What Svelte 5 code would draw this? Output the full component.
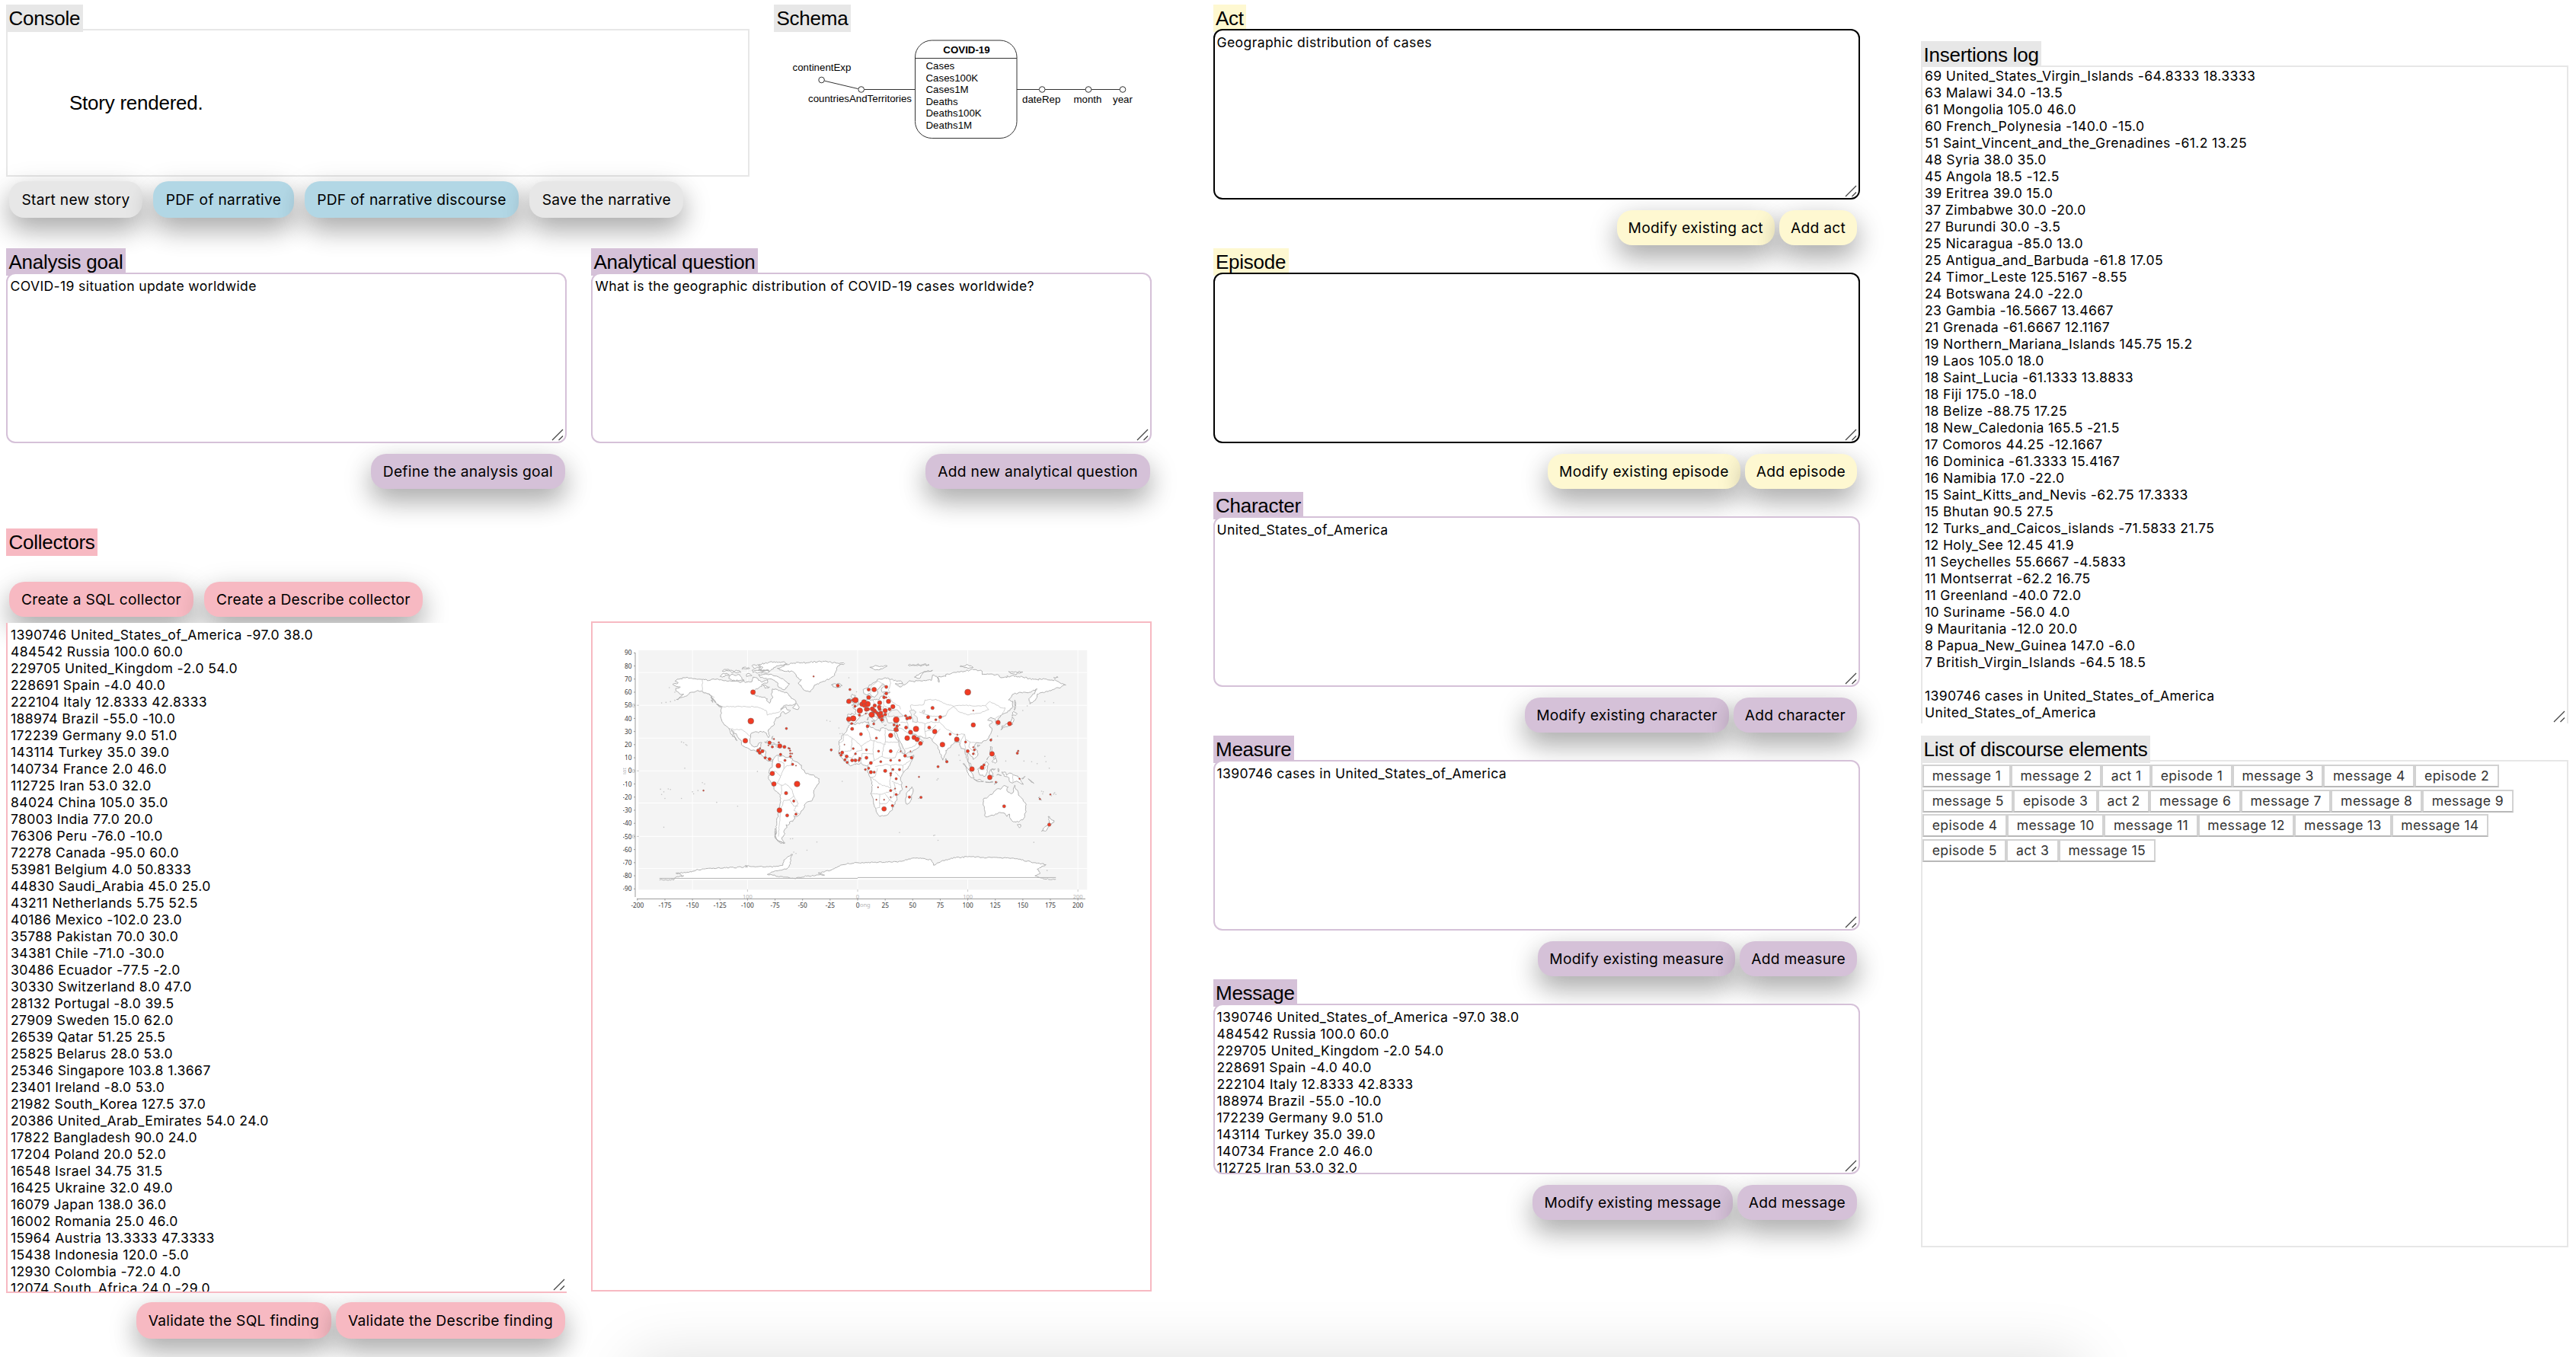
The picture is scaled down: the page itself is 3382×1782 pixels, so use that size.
<script>
  const findings = `1390746 United_States_of_America -97.0 38.0
484542 Russia 100.0 60.0
229705 United_Kingdom -2.0 54.0
228691 Spain -4.0 40.0
222104 Italy 12.8333 42.8333
188974 Brazil -55.0 -10.0
172239 Germany 9.0 51.0
143114 Turkey 35.0 39.0
140734 France 2.0 46.0
112725 Iran 53.0 32.0
84024 China 105.0 35.0
78003 India 77.0 20.0
76306 Peru -76.0 -10.0
72278 Canada -95.0 60.0
53981 Belgium 4.0 50.8333
44830 Saudi_Arabia 45.0 25.0
43211 Netherlands 5.75 52.5
40186 Mexico -102.0 23.0
35788 Pakistan 70.0 30.0
34381 Chile -71.0 -30.0
30486 Ecuador -77.5 -2.0
30330 Switzerland 8.0 47.0
28132 Portugal -8.0 39.5
27909 Sweden 15.0 62.0
26539 Qatar 51.25 25.5
25825 Belarus 28.0 53.0
25346 Singapore 103.8 1.3667
23401 Ireland -8.0 53.0
21982 South_Korea 127.5 37.0
20386 United_Arab_Emirates 54.0 24.0
17822 Bangladesh 90.0 24.0
17204 Poland 20.0 52.0
16548 Israel 34.75 31.5
16425 Ukraine 32.0 49.0
16079 Japan 138.0 36.0
16002 Romania 25.0 46.0
15964 Austria 13.3333 47.3333
15438 Indonesia 120.0 -5.0
12930 Colombia -72.0 4.0
12074 South_Africa 24.0 -29.0`;

  const insertions = `69 United_States_Virgin_Islands -64.8333 18.3333
63 Malawi 34.0 -13.5
61 Mongolia 105.0 46.0
60 French_Polynesia -140.0 -15.0
51 Saint_Vincent_and_the_Grenadines -61.2 13.25
48 Syria 38.0 35.0
45 Angola 18.5 -12.5
39 Eritrea 39.0 15.0
37 Zimbabwe 30.0 -20.0
27 Burundi 30.0 -3.5
25 Nicaragua -85.0 13.0
25 Antigua_and_Barbuda -61.8 17.05
24 Timor_Leste 125.5167 -8.55
24 Botswana 24.0 -22.0
23 Gambia -16.5667 13.4667
21 Grenada -61.6667 12.1167
19 Northern_Mariana_Islands 145.75 15.2
19 Laos 105.0 18.0
18 Saint_Lucia -61.1333 13.8833
18 Fiji 175.0 -18.0
18 Belize -88.75 17.25
18 New_Caledonia 165.5 -21.5
17 Comoros 44.25 -12.1667
16 Dominica -61.3333 15.4167
16 Namibia 17.0 -22.0
15 Saint_Kitts_and_Nevis -62.75 17.3333
15 Bhutan 90.5 27.5
12 Turks_and_Caicos_islands -71.5833 21.75
12 Holy_See 12.45 41.9
11 Seychelles 55.6667 -4.5833
11 Montserrat -62.2 16.75
11 Greenland -40.0 72.0
10 Suriname -56.0 4.0
9 Mauritania -12.0 20.0
8 Papua_New_Guinea 147.0 -6.0
7 British_Virgin_Islands -64.5 18.5

1390746 cases in United_States_of_America
United_States_of_America`;

  const story = [
    { name: 'Act', tone: 'yellow', ink: true, text: 'Geographic distribution of cases' },
    { name: 'Episode', tone: 'yellow', ink: true, text: '' },
    { name: 'Character', tone: 'purple', text: 'United_States_of_America' },
    { name: 'Measure', tone: 'purple', text: '1390746 cases in United_States_of_America' },
    { name: 'Message', tone: 'purple', text: findings.split('\n').slice(0, 10).join('\n') }
  ];

  const goals = [
    { name: 'Analysis goal', text: 'COVID-19 situation update worldwide', action: 'Define the analysis goal' },
    { name: 'Analytical question', text: 'What is the geographic distribution of COVID-19 cases worldwide?', action: 'Add new analytical question' }
  ];

  const discourse = [
    ['message 1', 'message 2', 'act 1', 'episode 1', 'message 3', 'message 4', 'episode 2'],
    ['message 5', 'episode 3', 'act 2', 'message 6', 'message 7', 'message 8', 'message 9'],
    ['episode 4', 'message 10', 'message 11', 'message 12', 'message 13', 'message 14'],
    ['episode 5', 'act 3', 'message 15']
  ];

  const measures = ['Cases', 'Cases100K', 'Cases1M', 'Deaths', 'Deaths100K', 'Deaths1M'];

  // Equirectangular projection: degrees to pixels of the map drawing.
  const px = (lon) => 1126 + lon * 1.4458;
  const py = (lat) => 1012.3 - lat * 1.722;

  // Deterministic noise, so that coastlines look uneven but never change.
  const noise = (a, b) => {
    const s = Math.sin(a * 12.9898 + b * 78.233) * 43758.5453;
    return s - Math.floor(s) - 0.5;
  };

  function outline(text, rough, close) {
    const pts = text.trim().split(/\s+/).map((p) => p.split(',').map(Number));
    const out = [];
    const n = close ? pts.length : pts.length - 1;
    for (let i = 0; i < n; i++) {
      const [ax, ay] = pts[i];
      const [bx, by] = pts[(i + 1) % pts.length];
      const steps = rough ? Math.max(1, Math.round(Math.hypot(bx - ax, by - ay) / 1.3)) : 1;
      for (let k = 0; k < steps; k++) {
        const t = k / steps;
        const amp = k ? rough : 0;
        const x = ax + (bx - ax) * t;
        const y = ay + (by - ay) * t;
        out.push(px(x + noise(x, y) * amp).toFixed(1) + ' ' + py(y + noise(y, x) * amp).toFixed(1));
      }
    }
    if (!close) out.push(px(pts[n][0]).toFixed(1) + ' ' + py(pts[n][1]).toFixed(1));
    return 'M' + out.join('L') + (close ? 'Z' : '');
  }

  const land = [
    // North and Central America
    '-168,66 -163,67 -166,68.5 -162,70 -156,71 -148,70.3 -141,69.7 -135,69 -128,70 -124,69.5 -115,68.5 -108,68 -101,67.7 -96,68 -95,71.5 -92,71 -90,69 -86,68 -82,69.5 -82,67 -87,66 -87,64.5 -93,62 -94.5,60 -94.5,58.5 -92,57 -88,56.5 -82,55 -82,53 -80,51.5 -79,53 -79,54.5 -77,56 -78.5,58.5 -77.5,60 -77.5,62.5 -73,62 -69,60.5 -65,60 -62,57 -59,55 -56,53 -56,51.5 -60,50 -66,50 -70,47 -65,48.8 -64,46.5 -61,46 -63,44.8 -66,43.5 -67,45 -70,43.5 -70,41.7 -74,40.5 -76,37 -76,35 -79,33 -81,31.5 -80,27 -81,25.3 -82.5,27.5 -83,29 -85,30 -89,30 -90,29 -94,29.5 -97.3,27.5 -97.5,25 -97.8,22 -96,19 -94,18.2 -91,18.7 -90,21 -87,21.5 -88,18.5 -88.8,16 -83.5,15 -83.5,11 -81,9 -79,9.5 -77,8.5 -78,7.5 -80,7.5 -83,8.5 -86,11 -88,13 -92,14.5 -96,15.7 -102,18 -105.5,20 -105.5,22.5 -109,26 -112.5,30 -114.7,31.5 -113,29 -109.5,23 -112,26 -115,28 -117,32.5 -121,35 -124,40 -124,47 -123,49 -128,51 -130,54 -134,58 -138,59.5 -146,61 -151,60 -154,58 -158,56.3 -164.5,54.5 -160,57 -158,58.5 -162,59 -165,61 -165,63 -161,64 -166,65',
    // Greenland
    '-73,78.2 -68,79.5 -65,81 -60,82 -50,82.3 -40,83.2 -30,83.5 -22,82.5 -12,81.7 -18,80 -19,77 -20,75 -22,72 -25,70.5 -30,68.3 -38,65.7 -43,60.2 -48,61.3 -51,64 -54,67 -51,69.5 -54,71 -56,73.5 -59,75.7 -67,76',
    // Arctic archipelago
    '-90,81 -80,83 -66,82.8 -64,81.5 -76,79 -79,76.5 -89,76.5 -86,79', '-117,73 -107,73.3 -105,70 -103,69 -114,69 -117,70.5', '-125,72 -122,74.3 -117,73.5 -123,71.3',
    '-90,73.5 -82,73.6 -76,72.5 -68,70.3 -62,66.5 -66,62 -72,64 -73,67.5 -78,70 -88,71', '-96,80 -91,81 -88,79 -94,78', '-103,79 -98,78.2 -105,77.5', '-116,76.5 -108,76.5 -106,75 -114,74.8', '-96,76.7 -80,75.7 -82,74.5 -95,75', '-101,73.5 -98,74 -96,72.7 -101,72', '-123,76 -116,76.5 -121,77.4', '-86,65.5 -80,64 -84,63', '-81,77 -90,77.3 -86,76.6',
    '-59,48 -55.5,51.5 -53,48.5 -54,46.8', '-128,50.7 -124,48.5 -126,49.3', '-133,54 -131.5,52.2 -132,54', '-134,58 -131,55 -133,56 -129,52 -131,54 -135,58.5',
    // Caribbean
    '-84.5,22 -82,23.1 -77,21.3 -74.5,20.2 -77.5,20', '-74,19.8 -70,19.8 -68.5,18.5 -72,18 -74,18.5', '-78,18.4 -76.3,18', '-67,18.4 -65.7,18.2', '-78,25 -77,26.5 -77.5,24',
    // South America
    '-77,8 -75,10.7 -72,12 -71,11 -68,11.5 -65,10.2 -62,10.7 -59,8 -54,6 -51,4.3 -50,1 -48,-1 -44,-2.7 -40,-3 -37,-5 -35,-6 -35,-9 -37.5,-12 -39,-14 -39.5,-18 -41,-22 -45,-23.5 -48.5,-26 -49,-28.7 -52.5,-33 -55,-34.8 -58,-34 -57,-36.5 -59,-38.7 -62,-39 -62.5,-41 -65,-41 -64,-43 -67,-46 -66,-48 -69,-51 -68,-53 -66,-55 -71,-54.5 -74,-52 -75.3,-49 -74.5,-45 -73.5,-41.5 -73.5,-37 -71.5,-32 -70.5,-25 -70.3,-18.5 -76,-14 -79,-8 -81,-6 -80,-3 -80.7,-1 -80,1 -77.5,3.5',
    '-75,-44 -73.5,-47 -75,-49 -74,-52 -70,-54 -67,-55 -72,-54 -75,-51 -74.5,-47',
    // Africa
    '-6,35.7 -2,35.2 3,36.8 10,37.3 11,34 15,32.3 19.5,30.3 22,32.8 29,31 34,31.2 33,28.5 35.5,24 37.5,20 39,16 43,12 44.5,10.5 51,12 49,7.5 46,3 41,-2 39,-5 39.5,-8 40.7,-14 36,-18.5 35,-23 32.7,-26 30.5,-30.5 26,-34 20,-34.8 18.2,-33 15.3,-27.5 14.3,-22 11.8,-17.5 13.7,-11 12,-6 9,-1 9.5,3.8 6,4.3 3,6.4 -2,4.8 -7.5,4.3 -13,8.5 -16.5,12 -17.3,14.7 -16.2,19 -17,21 -14.5,26 -10,30 -9.5,32.5',
    '49.3,-12 50.4,-15.5 47.5,-24 45,-25.5 43.5,-22.5 44.3,-17 47,-15',
    // Eurasia
    '-9,43.2 -9,38.7 -8.8,37 -6,36.3 -2,36.8 0,39 3.2,42 6,43.2 9,44.3 12,42 16,38.3 18.3,40 14,42.5 12.5,45.5 15,44.5 19.3,42 20,39 22,36.7 24,38 23,40.5 26,40.8 27,37.5 28,36.7 32,36.2 36,36.5 34.5,31.5 35,29.5 39,21.5 42.7,16 43.4,12.8 48,14 52,16 55,17.5 59.7,22.5 56.5,24.4 56,26 51.5,24.7 50,26.7 48,30 51,28 54,26.5 61,25.2 66.5,25 70,21 73,18.5 74.5,13.5 77.3,8.2 80,13 80,15.5 86,20 89,21.8 92,22 94,17 97.5,16.5 98.5,10 101,6 103.5,1.4 103,4.5 100,7.5 99.5,12.7 101,13.4 104.5,10.5 105,8.7 109,11.7 108.7,15.5 105.8,19 108,21.6 111,21.3 117,23.3 121,28.5 122,31 119.5,35 122.5,37 118,38.7 121,40.7 125,39.5 126.5,34.7 129.3,35.5 127.5,39.5 131,42.8 136,44.5 140.5,48.5 141,53 137,54 143,59.3 155,59.5 163,62.5 161,60 155.5,55 156.5,51 162,55 163,58.5 170,60 179,62.5 189,65.5 180,69 170,70 160,69.7 150,71.5 140,72.5 130,71 127,73.5 113,73.5 113,76 104,77.7 98,76 87,75 80,73.5 80,72 73,71.5 74,67.5 72.5,71 68,73 67,69 60,69 54,68.7 46,68 44,66.3 38,64 34,66.5 41,66.5 40,68 30,69.7 25,71 19,70 14,67 10,64 5,62 5.5,59 8,58 10.5,59.3 12.5,56 16.5,57 18.5,60 17.5,61.5 22,65.7 25,65 21.5,62 22,60.2 29.5,60 24,59.3 24,57.5 21.3,57 20,54.8 14,54 10.5,54.5 10.5,57.5 8.2,57 8.5,54 4.5,52.5 0,49.5 -4.5,48.4 -1.5,46 -1.7,43.4',
    // Islands of Europe and Asia
    '-5.5,50 1.3,51.3 0,53.3 -3,56 -2,57.5 -5,58.5 -6,56.5 -3,54 -5,52.5 -3,51.3', '-10,52 -6.3,52.2 -6,54.7 -9,54.5', '-24,65.5 -21,64 -18.5,63.5 -14,65 -16,66.4 -22,66.3',
    '8.3,39 9.7,41 9.5,39', '12.5,38 15.5,38 15,36.8', '32.5,35 34.3,35.5 33,34.7', '24,35.2 26,35',
    '51.5,71.5 56,74 68,76.8 60,75.6 57,71', '11,79 18,80 27,80 19,77 15,77.3', '46,80.6 60,81.3 65,80.8 54,80.2', '93,79.5 100,81 105,78.8 100,78', '137,75.8 150,75.3 143,73.7 139,74.2', '178,71.2 182,71.3',
    '130,31.3 132,33.7 136,33.7 140.7,35.3 142,39.5 140.5,41.3 139.5,38.5 136,36 131,34.3', '140.2,42 145,43.5 141.8,45.3', '142.3,46.3 143.5,49.5 142.7,54', '80,9.5 81.8,7 80.2,6.2', '109,20 111,19.5 109,18.4', '120.2,23 121.8,25 121,22.2',
    '95.5,5.5 98.5,3.5 104,-2 105.8,-5.7 102,-4 98.7,1.5', '105.5,-6.3 110,-6.7 114.3,-8 110,-8.2', '109,1.3 113,3 117,7 119,5 117.5,1 116,-4 111,-3.3', '119.5,-5.5 119.5,-1 120.7,1 125,1.5 121,0.3 122,-1 123.3,-4.5 121,-3', '120,14 120.5,18.5 122.2,18 121.7,14.5 124,12.7', '122,7.2 125.5,9.8 126.5,7 125,5.8', '117.3,8.5 119.3,11', '123,10 125,11.8 124,9.5', '127.6,2 128.6,0.5 127.8,-0.8', '126.3,-3.2 130.5,-3.5', '116,-8.5 123,-8.5 119,-8.9', '124,-10.2 127,-8.4',
    '131,-0.8 134,-0.8 135,-3.3 138,-1.7 144,-3.8 147.5,-6 150.5,-10.3 144,-7.8 141,-9.2 138,-8.3 137.5,-5.3 133,-4', '149,-5.8 152,-4.2 150,-6.2', '155,-6 157,-7.5 160,-9.5', '164,-20.3 167,-22.3',
    // Australia and New Zealand
    '114,-22 114,-26 115.7,-31.5 115.3,-34 118,-35 123.5,-34 129,-31.7 132,-32 135.5,-34.8 138,-33 138,-35.5 140,-38 146.3,-39 150,-37.3 153,-31 153,-25.5 149,-21 146,-18.5 145.3,-15 143.5,-14 142.5,-10.8 141,-16.8 139,-17.5 135.5,-15 136.7,-12.2 132.5,-11.3 130,-14 126,-14 122,-18', '145,-41 148,-41 147,-43.5', '173,-34.8 175.7,-37 178.4,-38 175.2,-41.4 174,-39.3', '172.7,-40.7 174,-42 170.5,-46 167,-46 168.5,-44'
  ].map((d) => outline(d, 1.3, true));

  const antarctica = outline('-180,-83.2 -167,-83.2 -165,-81 -158,-80 -165,-78 -155,-77.3 -150,-76.5 -145,-75.3 -135,-74.3 -120,-74 -100,-73.2 -102,-72.2 -85,-73.3 -75,-73 -68,-72 -67,-68 -62,-65 -59,-63.7 -61,-67 -61,-71 -65,-75 -78,-77 -82,-79 -66,-81 -58,-82 -45,-80 -30,-79.5 -36,-78 -25,-76 -18,-73 -10,-71 0,-70 15,-69.7 30,-69.5 40,-69 50,-66.5 58,-66.8 67,-68 69,-72 75,-69.5 85,-66.5 100,-65.5 113,-66 130,-66.2 145,-67 160,-70 171,-71.5 163,-75 166,-78 161,-80 170,-82.5 180,-82.7', 1, false);

  const seas = [
    '28.5,41.5 28,43.5 31,46.5 36,46.5 38,44.5 41.5,42 38,41 33,42', '47,45.5 51,46.5 53,45 51,43 54,41 54,37 50,37.3 49.5,40.5', '58.5,45.5 61,46.3 60,44'
  ].map((d) => outline(d, 0.8, true));

  const borders = [
    '-141,69.7 -141,60', '-141,60 -137,59 -130,56', '-123,49 -95,49 -89,48 -83,46 -82,42.5 -76,44 -71,45 -68,47.5', '-117,32.5 -111,31.3 -106,31.7 -102,29.7 -97.5,26', '-92,14.7 -90,17.5',
    '-72,12 -72,7.5 -67,6 -67,1.5 -70,-4 -73,-9.5 -69,-11 -69,-17.5 -70,-18.3', '-60,8 -60,4 -64,4 -67,1.5', '-80,-3.5 -75,-0.2 -70,-4', '-65,-10 -60,-14 -58,-19 -62,-22 -67,-22.5 -70,-30 -71,-40 -72,-50', '-58,-19 -54,-25 -58,-30 -53,-33', '-69,-11 -65,-10', '-62,-22 -58,-27 -54,-27',
    '-9,27.5 -13,27.5 -13,23 -17,21', '-9,27.5 -5,25 3,19 12,23.5 10,30 8,33.5 9,37', '-5,25 -6,15.5 -12,15', '3,19 4,15.5 -1,15 -5,10 -8,10.5 -11,12 -15,12.7', '12,23.5 15,23 14,13 4,13.3 3,6.5', '25,31.5 25,20 15,23', '25,22 37,22', '24,20 22,11 28,9.5 34,10 36,14.5 38,17', '14,13 15,8 9,4.5', '15,8 22,11', '16,3.5 27,5 30,4 34,5 41,4 48,8', '36,14.5 43,12.5', '12,-5 17,-8 22,-11 24,-11 30,-13 29,-8 31,-1 30,4', '18,2 16,-4 12,-5', '12,-17.5 23,-17.6 30,-15.5 33,-14 35,-16', '20,-18 20,-28 17,-28.5', '20,-25 26,-25 29,-22 32,-24', '25,-17.7 29,-22 33,-19 33,-16', '34,-1 39,-5', '31,-8 40,-11', '33,-9 34,-14', '41,4 41,-1.5', '-2,5 -3,10', '1,6 1,11', '-8,4.5 -8,8 -11,10',
    '28,71 29,69.5 30,67 28,62 29,60', '12,59 12,64 18,68.5 24,66', '28,57 32,52 38,49.5 39,47', '23.5,54 24,50 28,48 29.5,45.5', '19,49.5 24,49 21,46 14,46 10,47.5', '15,51 14,54', '6,50 8,49 6.5,46', '-1.7,43.3 3,42.4', '21,46 28,44', '19,42 22,42 26,41.7',
    '49,46.5 48,50 60,50.5 61,54 71,54.5 80,51 87,49.3 98,50 108,49.5 116,49.8 120,53 127,50 131,48 134,48 131,43', '87,49 91,45.5 100,42.7 111,44 119,46.7 116,49.8', '87,49 82,46 80,42 74,40 74,37.5 79,33 88,28 97,28 98,24 102,22 108,21.6', '56,45 62,43 68,41.5 80,42', '54,37.5 61,36 61,31 62,26 61,25', '61,36 66,37.3 74,37', '61,30 67,31 71,35', '68,24 71,28 75,32', '88,22 89,26 92,25 92.5,22', '97,28 94,24 93,20', '98,24 97.5,19 99,12', '102,22 101,18 105,15 107,12', '36,32 39,32.5 45,29 48,29', '39,37 42,37 45,37 46,33 48,30.5', '52,23 55,22.5 52,19 45,17 43,17', '41,42 47,41.5', '44,39.5 45,37', '29,41 26,41.5', '125,40 130,42.5', '141,-3 141,-9', '109.5,1.5 115,1 117,4'
  ].map((d) => outline(d, 0.7, false));

  const specks = '-179,-14 -178,-18 -176,-16 -175,-21 -172,-13.8 -170,-14.2 -160,-21 -157,2 -158,21.5 -156,20 -155,19.5 -160,22 -149,-17.5 -150,-16 -145,-15 -141,-9 -139,-10 -128,-24 -109,-27 -91,-0.5 -176,-43 -59,-51.7 -61,-51.8 -37,-54.3 -46,-60.5 -25,37.8 -28,38.5 -17,32.7 -16,28.3 -14,28.5 -14,-8 -24,15 55.5,-21 57,-20.2 73,-6 72,-7 69,-49.3 70,-49 73,-53 38,-47 167,-15.5 168,-17.5 178,-17.8 179,-16.7 180,-18 160,-54.5 158,7 163,5.5 151,7.5 134.5,7.5 171,7 145,15 144.8,13.5 170,53 -170,52.8 -174,52.2 -178,51.8 -166,53.8 -7,62 -1,60.3 -8,71 150,46 154,49.5 92,12 93,8 127,26.5 -58,-62 -56,-63 172,-76 178,52 176,-19 178.5,-17 168.5,-16 -171,63.5 -166,60 165,-20 174,2 170,11'.split(' ').map((p) => p.split(',').map(Number));

  // Longitude, latitude and radius for every country that reports cases.
  const dots = `-97,38,3.7 100,60,3.8 -2,54,3.5 -4,40,3.5 12.8,42.8,3.5 -55,-10,3.6 9,51,3.5 35,39,3.7 2,46,3.5 53,32,3.5 105,35,2.8 77,20,3.1 -76,-10,2.9 -95,60,3 4,50.8,2.9 45,25,3.1 5.75,52.5,3.1 -102,23,3 70,30,2.9 -71,-30,3.1 -77.5,-2,2.9 8,47,2.8 -8,39.5,3 15,62,2.9 51.25,25.5,2.8 28,53,2.8 103.8,1.4,3 -8,53,2.9 127.5,37,2.7 54,24,2.8 90,24,3 20,52,2.7 34.75,31.5,2.7 32,49,2.7 138,36,2.7 25,46,2.8 13.3,47.3,2.7 120,-5,2.9 -72,4,3 24,-29,2.9 122,13,3 -70.7,19,2.8 30,27,2.8 48,29.5,2.7 -80,9,2 10,56,2.5 21,44,2.6 10,62,2 15.5,49.8,2.2 26,64,2 47.5,40.5,2 45,40,2 68,48,2.1 3,28,2 24,56,1.9 26,59,1.9 22,39,2 20,47,1.9 -5,32,2 65,33,2 44,33,2 57,21,2.5 64,41,2.1 75,41,2 71,39,1.4 -64,-34,2 -65,-17,2.1 133,-27,2 174,-41,2.1 -18,65,2 -90.3,15.5,2.1 -86.5,15,2.1 -88.9,13.8,2 -80,21.5,2.1 -66.5,18.3,2 -84,10,1.6 -61,11,1.4 -70,12.5,1.6 -77.5,18.3,1.5 -66,8,1.5 -59,5,1.5 -58,-23,1.5 -56,-33,1.5 8,10,2 12,6,2 -2,8,2 -5,8,2 -10,11,2 -14,14,2 -15,12,1.5 -11.5,8.5,1.5 -9.5,6.5,1.5 30,15,2 43,11.5,1.8 49,10,1.9 25,0,2.1 12,-1,2.1 15,-1,1.5 10,2,1.5 7,1,1.3 38,1,1.5 32,1,1.4 30,-2,1.4 30,-15,1.5 35,-6,1.5 35,-18,1.5 47,-20,1.6 57.5,-20.2,1.6 31.5,-26.5,1.5 21,7,1.4 19,15,1.4 8,16,1.4 17,25,1.4 -4,17,1.3 -2,13,1.3 2,9.5,1.5 1.2,8,1.4 -24,16,1.4 38,8,1.4 30,8,1.4 9,34,1.9 14.6,35.8,1.4 33,35,1.4 35.8,34,1.8 36,31,1.6 43.5,42,1.5 -7,62,1.4 -64.7,32.3,1.4 113,2.5,2.5 114.7,4.5,1.5 100,15,2 106,16,1.4 105,13,1.3 98,22,1.4 121,23.5,1.4 145,13.5,1.5 81,7,1.6 73,3.2,1.5 84,28,1.5 29,47,2 25,43,2 20,41,2 22,41.8,2.3 18,44,2 15,46,2.5 19.5,48.7,2.4 16,45.2,2 19,42.5,2 6,49.8,2.4 -4.5,54,1.6 -2.4,49.3,1.5 1.6,42.5,1.5 7.4,43.7,.8 -5.4,36.1,1.4 9.5,47,2 26,56,1 -56,4,.7 105,46,.8 -140,-15,.9 -61.2,13.2,.9 38,35,.8 18.5,-12.5,.8 39,15,.8 30,-20,.8 30,-3.5,1 34,-13.5,.8 -61.8,17,.9 125.5,-8.5,1 24,-22,.8 17,-22,.8 -16.5,13.5,1 145.8,15.2,1 105,18,.9 175,-18,1 -88.7,17.2,1 165.5,-21.5,1 44.2,-12.2,.9 -61.3,15.4,1 -62.7,17.3,1 90.5,27.5,.8 -71.6,21.7,1 55.7,-4.6,.9 -40,72,.9 -12,20,.7 147,-6,.9 -76,24.3,.9 -59.5,13.2,.8 48,15,.8 -81,19.5,.8`
    .split(' ').map((d) => d.split(',').map(Number));

  const lats = Array.from({ length: 19 }, (_, i) => 90 - i * 10);
  const lons = Array.from({ length: 17 }, (_, i) => -200 + i * 25);
</script>

{#snippet grip()}
  <svg class="grip" width="16" height="16" viewBox="0 0 16 16"><path d="M1 15L15 1M9.5 15L15 9.5" /></svg>
{/snippet}

<main class="page">
  <div class="left">
    <div class="top">
      <section class="console">
        <h2 class="title gray over">Console</h2>
        <div class="screen">Story rendered.</div>
      </section>
      <section>
        <h2 class="title gray">Schema</h2>
        <svg class="schema" width="480" height="150" viewBox="1016 42 480 150">
          <path d="M1082.5 106.2L1126.5 116.6M1135 117.5H1201.5M1335 117.5H1364M1372 117.5H1425M1433 117.5H1470" />
          <circle cx="1078.6" cy="105" r="3.8" />
          <circle cx="1130.7" cy="117.5" r="3.8" />
          <circle cx="1368.2" cy="117.5" r="3.8" />
          <circle cx="1429" cy="117.5" r="3.8" />
          <circle cx="1474" cy="117.5" r="3.8" />
          <rect x="1201.5" y="53" width="133.5" height="128.5" rx="22" />
          <path d="M1201.5 76.5H1335" />
          <text class="bold" x="1269" y="70" text-anchor="middle">COVID-19</text>
          {#each measures as m, i}<text x="1215.5" y={91 + i * 15.6}>{m}</text>{/each}
          <text x="1040.5" y="93">continentExp</text>
          <text x="1061" y="134">countriesAndTerritories</text>
          <text x="1342" y="135">dateRep</text>
          <text x="1409.5" y="135">month</text>
          <text x="1461" y="135">year</text>
        </svg>
      </section>
    </div>
    <div class="row main-actions">
      <button class="gray">Start new story</button>
      <button class="blue">PDF of narrative</button>
      <button class="blue">PDF of narrative discourse</button>
      <button class="gray">Save the narrative</button>
    </div>

    <div class="pair goals">
      {#each goals as g}
        <section>
          <h2 class="title purple">{g.name}</h2>
          <div class="area">{g.text}{@render grip()}</div>
          <div class="row end"><button class="purple">{g.action}</button></div>
        </section>
      {/each}
    </div>

    <h2 class="title pink">Collectors</h2>
    <div class="row collectors">
      <button class="pink">Create a SQL collector</button>
      <button class="pink">Create a Describe collector</button>
    </div>
    <div class="pair results">
      <section>
        <div class="list">{findings}{@render grip()}</div>
        <div class="row end validate">
          <button class="pink">Validate the Describe finding</button>
          <button class="pink">Validate the SQL finding</button>
        </div>
      </section>
      <div class="chart">
        <svg width="616" height="360" viewBox="818 850 616 360">
          <rect class="sea" x="838.3" y="854" width="589" height="314.3" />
          <g class="grid">
            {#each [75, 50, 25, 0, -24.5, -50, -74.5] as lat}<path d="M838.3 {py(lat)}H1427.3" />{/each}
            {#each [-150, -100, 0, 100, 200] as lon}<path d="M{px(lon)} 854V1168.3" />{/each}
          </g>
          <g class="land">
            {#each land as d}<path {d} />{/each}
            <path d={antarctica} />
            <path d="M{px(-180)} 1153.4H1126M1126 1152.4H{px(180)}" />
          </g>
          <g class="lake">{#each seas as d}<path {d} />{/each}</g>
          <g class="border">{#each borders as d}<path {d} />{/each}</g>
          <g class="speck">{#each specks as [a, b]}<circle cx={px(a)} cy={py(b)} r=".8" />{/each}</g>
          <g class="dot">{#each dots as [a, b, r]}<circle cx={px(a)} cy={py(b)} r={r * 1.05} />{/each}</g>
          <g class="axis">
            <path d="M834 857V1178M836 1180.4H1425" />
            {#each lats as lat}
              <path d="M832 {py(lat)}h2" />
              <text x="829.5" y={py(lat) + 3.1} text-anchor="end">{lat}</text>
            {/each}
            {#each lons as lon}
              <path d="M{px(lon)} 1180v2.5" />
              <text x={px(lon)} y="1192" text-anchor="middle">{lon}</text>
            {/each}
          </g>
          <g class="faint">
            {#each [-100, 0, 100, 200] as lon}
              <path d="M{px(lon)} 1168v3" />
              <text x={px(lon)} y="1180" text-anchor="middle">{Math.abs(lon)}</text>
            {/each}
            {#each [50, 0, -50] as lat}
              <path d="M836 {py(lat)}h3" />
              <text x="834" y={py(lat) + 3} text-anchor="end">{Math.abs(lat)}</text>
            {/each}
            <text x="1127" y="1191">long</text>
            <text transform="translate(822 1017) rotate(-90)">lat</text>
          </g>
        </svg>
      </div>
    </div>
  </div>

  <div class="middle">
    {#each story as s}
      <section class="block">
        <h2 class="title {s.tone}">{s.name}</h2>
        <div class="area" class:ink={s.ink}>{s.text}{@render grip()}</div>
        <div class="row end">
          <button class={s.tone}>Add {s.name.toLowerCase()}</button>
          <button class={s.tone}>Modify existing {s.name.toLowerCase()}</button>
        </div>
      </section>
    {/each}
  </div>

  <div class="right">
    <h2 class="title gray">Insertions log</h2>
    <div class="log">{insertions}{@render grip()}</div>
    <h2 class="title gray over">List of discourse elements</h2>
    <div class="elements">
      {#each discourse as line}
        <div class="chips">{#each line as c}<span class="chip">{c}</span>{/each}</div>
      {/each}
    </div>
  </div>

  <div class="drawer"></div>
</main>

<style>
  :global(body) { background: #fff; overflow: hidden; }
  .page {
    box-sizing: border-box;
    position: relative;
    width: 3382px;
    height: 1782px;
    overflow: hidden;
    padding: 6px 8px 0;
    display: grid;
    grid-template-columns: 1504px 849px 850px;
    column-gap: 80.5px;
    align-items: start;
    color: #000;
    font: 17.6px/22px Inter, sans-serif;
    letter-spacing: .36px;
  }
  .page > div { min-width: 0; }
  .title {
    width: max-content;
    height: 36px;
    margin: 0;
    padding: 0 3.5px;
    font: 400 26px/36px "Liberation Sans", Arial, sans-serif;
    letter-spacing: -.25px;
  }
  .over { position: relative; z-index: 1; }
  .gray { background: #e7e7e7; }
  .blue { background: #b2d7e5; }
  .purple { background: #d5c1d8; }
  .yellow { background: #fef8d1; }
  .pink { background: #f7b9c2; }

  button {
    height: 46px;
    border: 0;
    border-radius: 20px;
    padding: 2px 16px 0;
    color: #000;
    font: 19.2px/1 Inter, sans-serif;
    letter-spacing: .28px;
    white-space: nowrap;
    box-shadow: 0 16px 32px rgba(0, 0, 0, .2), 0 12px 40px rgba(0, 0, 0, .19);
  }
  .row { display: flex; gap: 14px; }
  .end { flex-direction: row-reverse; gap: 6px; margin-top: 14px; padding-right: 2px; }
  .middle button { padding: 2px 15px 0; }
  .middle .end { padding-right: 3.5px; }
  .main-actions { margin-top: 6px; padding-left: 4px; }
  .main-actions button { padding: 2px 16.5px 0; }
  .main-actions button, .validate button { height: 48px; }

  .top { display: flex; gap: 32px; }
  .console { width: 976px; }
  .screen {
    box-sizing: border-box;
    height: 194px;
    margin-top: -4px;
    padding-left: 81px;
    border: 2px solid #e7e7e7;
    font: 26px/190px "Liberation Sans", Arial, sans-serif;
    letter-spacing: -.25px;
  }
  .schema { display: block; }
  .schema path, .schema circle, .schema rect { fill: #fff; stroke: #333; stroke-width: 1; }
  .schema text { font: 13.3px "Liberation Sans", Arial, sans-serif; letter-spacing: 0; }
  .schema .bold { font-weight: 700; }

  .pair { display: grid; grid-template-columns: 736px 736px; gap: 32px; }
  .goals { margin: 40px 0 52px; }
  .area {
    box-sizing: border-box;
    position: relative;
    z-index: 1;
    height: 224px;
    margin-top: -4px;
    padding: 5px 3.5px 0;
    overflow: hidden;
    border: 2px solid #d5c1d8;
    border-radius: 12px;
    background: #fff;
    white-space: pre;
  }
  .middle .area { padding-left: 3px; }
  .area.ink { border-color: #000; }
  .grip { position: absolute; right: 2px; bottom: 1px; fill: none; stroke: #444; stroke-width: 1.3; }

  .collectors { margin-top: 34px; padding-left: 4px; }
  .results { margin-top: 6px; }
  .list {
    box-sizing: border-box;
    position: relative;
    z-index: 1;
    height: 880px;
    margin-top: 2px;
    padding: 5px 4px 0;
    overflow: hidden;
    border: solid #f7b9c2;
    border-width: 0 0 2px 2px;
    background: #fff;
    white-space: pre;
  }
  .validate { margin-top: 12px; }
  .chart {
    box-sizing: border-box;
    height: 880px;
    padding: 32px 40px;
    border: 2px solid #f7b9c2;
  }
  .chart svg { display: block; }
  .chart text { font: 8.3px "Noto Sans", sans-serif; letter-spacing: 0; fill: #3a3a3a; }
  .sea { fill: #f4f4f4; }
  .grid path { stroke: #fff; stroke-width: 1; fill: none; }
  .land path { fill: #fff; stroke: #b2b2b2; stroke-width: 1; }
  .lake path { fill: #f4f4f4; stroke: #bcbcbc; stroke-width: .9; }
  .border path { fill: none; stroke: #c4c4c4; stroke-width: .8; }
  .speck circle { fill: #c4c4c4; }
  .dot circle { fill: #f23a22; stroke: #77605f; stroke-width: .5; }
  .axis path { stroke: #8f8f8f; stroke-width: .9; fill: none; }
  .faint path { stroke: #bbb; stroke-width: .8; fill: none; }
  .chart .faint text { fill: #b5b5b5; font-size: 7.5px; }

  .block { height: 320px; }

  .right { padding-top: 48px; }
  .log {
    box-sizing: border-box;
    position: relative;
    height: 864px;
    margin: -4px 0 16px;
    padding: 1px 0 0 3px;
    overflow: hidden;
    border: solid #e7e7e7;
    border-width: 2px 2px 0;
    background: #fff;
    white-space: pre;
  }
  .elements {
    box-sizing: border-box;
    height: 640px;
    margin-top: -4px;
    padding-top: 4px;
    border: 2px solid #e7e7e7;
    color: #333;
  }
  .chips { display: flex; height: 32.6px; }
  .chip {
    box-sizing: border-box;
    height: 30px;
    padding: 0 10.65px;
    border: 2px solid #d2d2d2;
    border-bottom-color: #b8b8b8;
    line-height: 26px;
  }
  /* Panel parked under the fold: only its shadow reaches the page. */
  .drawer {
    position: absolute;
    top: 1782px;
    left: 832px;
    width: 1900px;
    height: 100px;
    box-shadow: 0 0 80px rgba(0, 0, 0, .13);
  }
</style>
